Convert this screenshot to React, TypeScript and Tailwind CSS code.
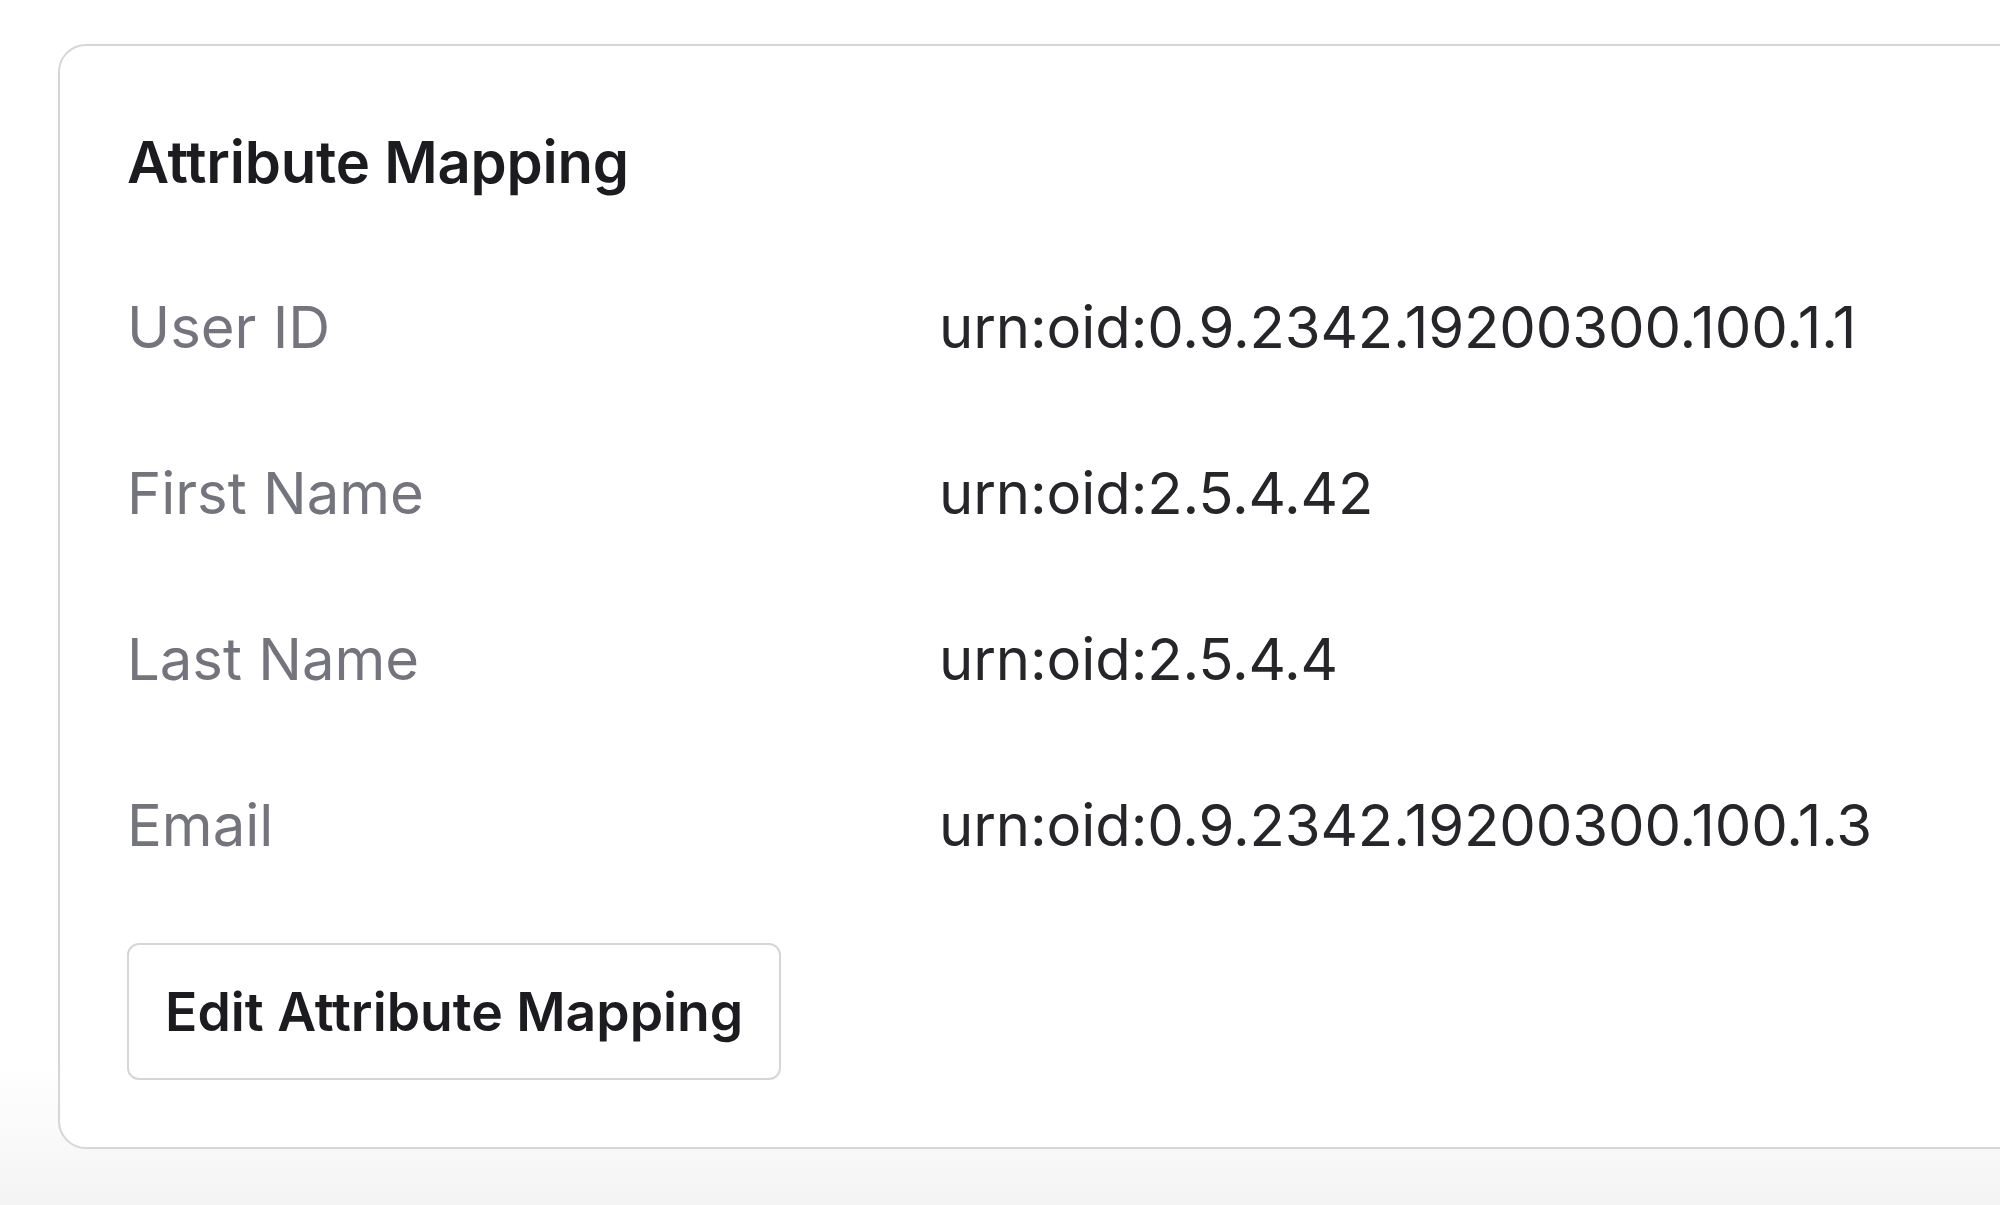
import React from 'react';

const attributes = [
  { label: 'User ID', value: 'urn:oid:0.9.2342.19200300.100.1.1' },
  { label: 'First Name', value: 'urn:oid:2.5.4.42' },
  { label: 'Last Name', value: 'urn:oid:2.5.4.4' },
  { label: 'Email', value: 'urn:oid:0.9.2342.19200300.100.1.3' },
];

export default function App() {
  return (
    <div className="w-[2000px] h-[1205px] overflow-hidden bg-[linear-gradient(to_bottom,#ffffff_0%,#ffffff_88%,#f4f4f4_100%)] font-['Inter',sans-serif] pt-[44px] pl-[58px]">
      <div className="w-[2100px] h-[1105px] bg-white border-2 border-[#d6d6d6] rounded-[28px] pt-[87px] pl-[67px]">
        <h2 className="text-[58px] leading-none font-semibold text-[#1b1b20] tracking-[-0.2px]">Attribute Mapping</h2>

        <div className="mt-[107px] flex flex-col gap-[108px]">
          {attributes.map((attr) => (
            <div key={attr.label} className="flex items-center text-[58px] leading-none">
              <span className="w-[812px] text-[#74747e]">{attr.label}</span>
              <span className="text-[#25252a] tracking-[-0.1px]">{attr.value}</span>
            </div>
          ))}
        </div>

        <button className="mt-[89px] h-[137px] px-[36px] bg-white border-2 border-[#d6d6d6] rounded-[12px] text-[53.5px] leading-none font-semibold text-[#1b1b20]">
          Edit Attribute Mapping
        </button>
      </div>
    </div>
  );
}
